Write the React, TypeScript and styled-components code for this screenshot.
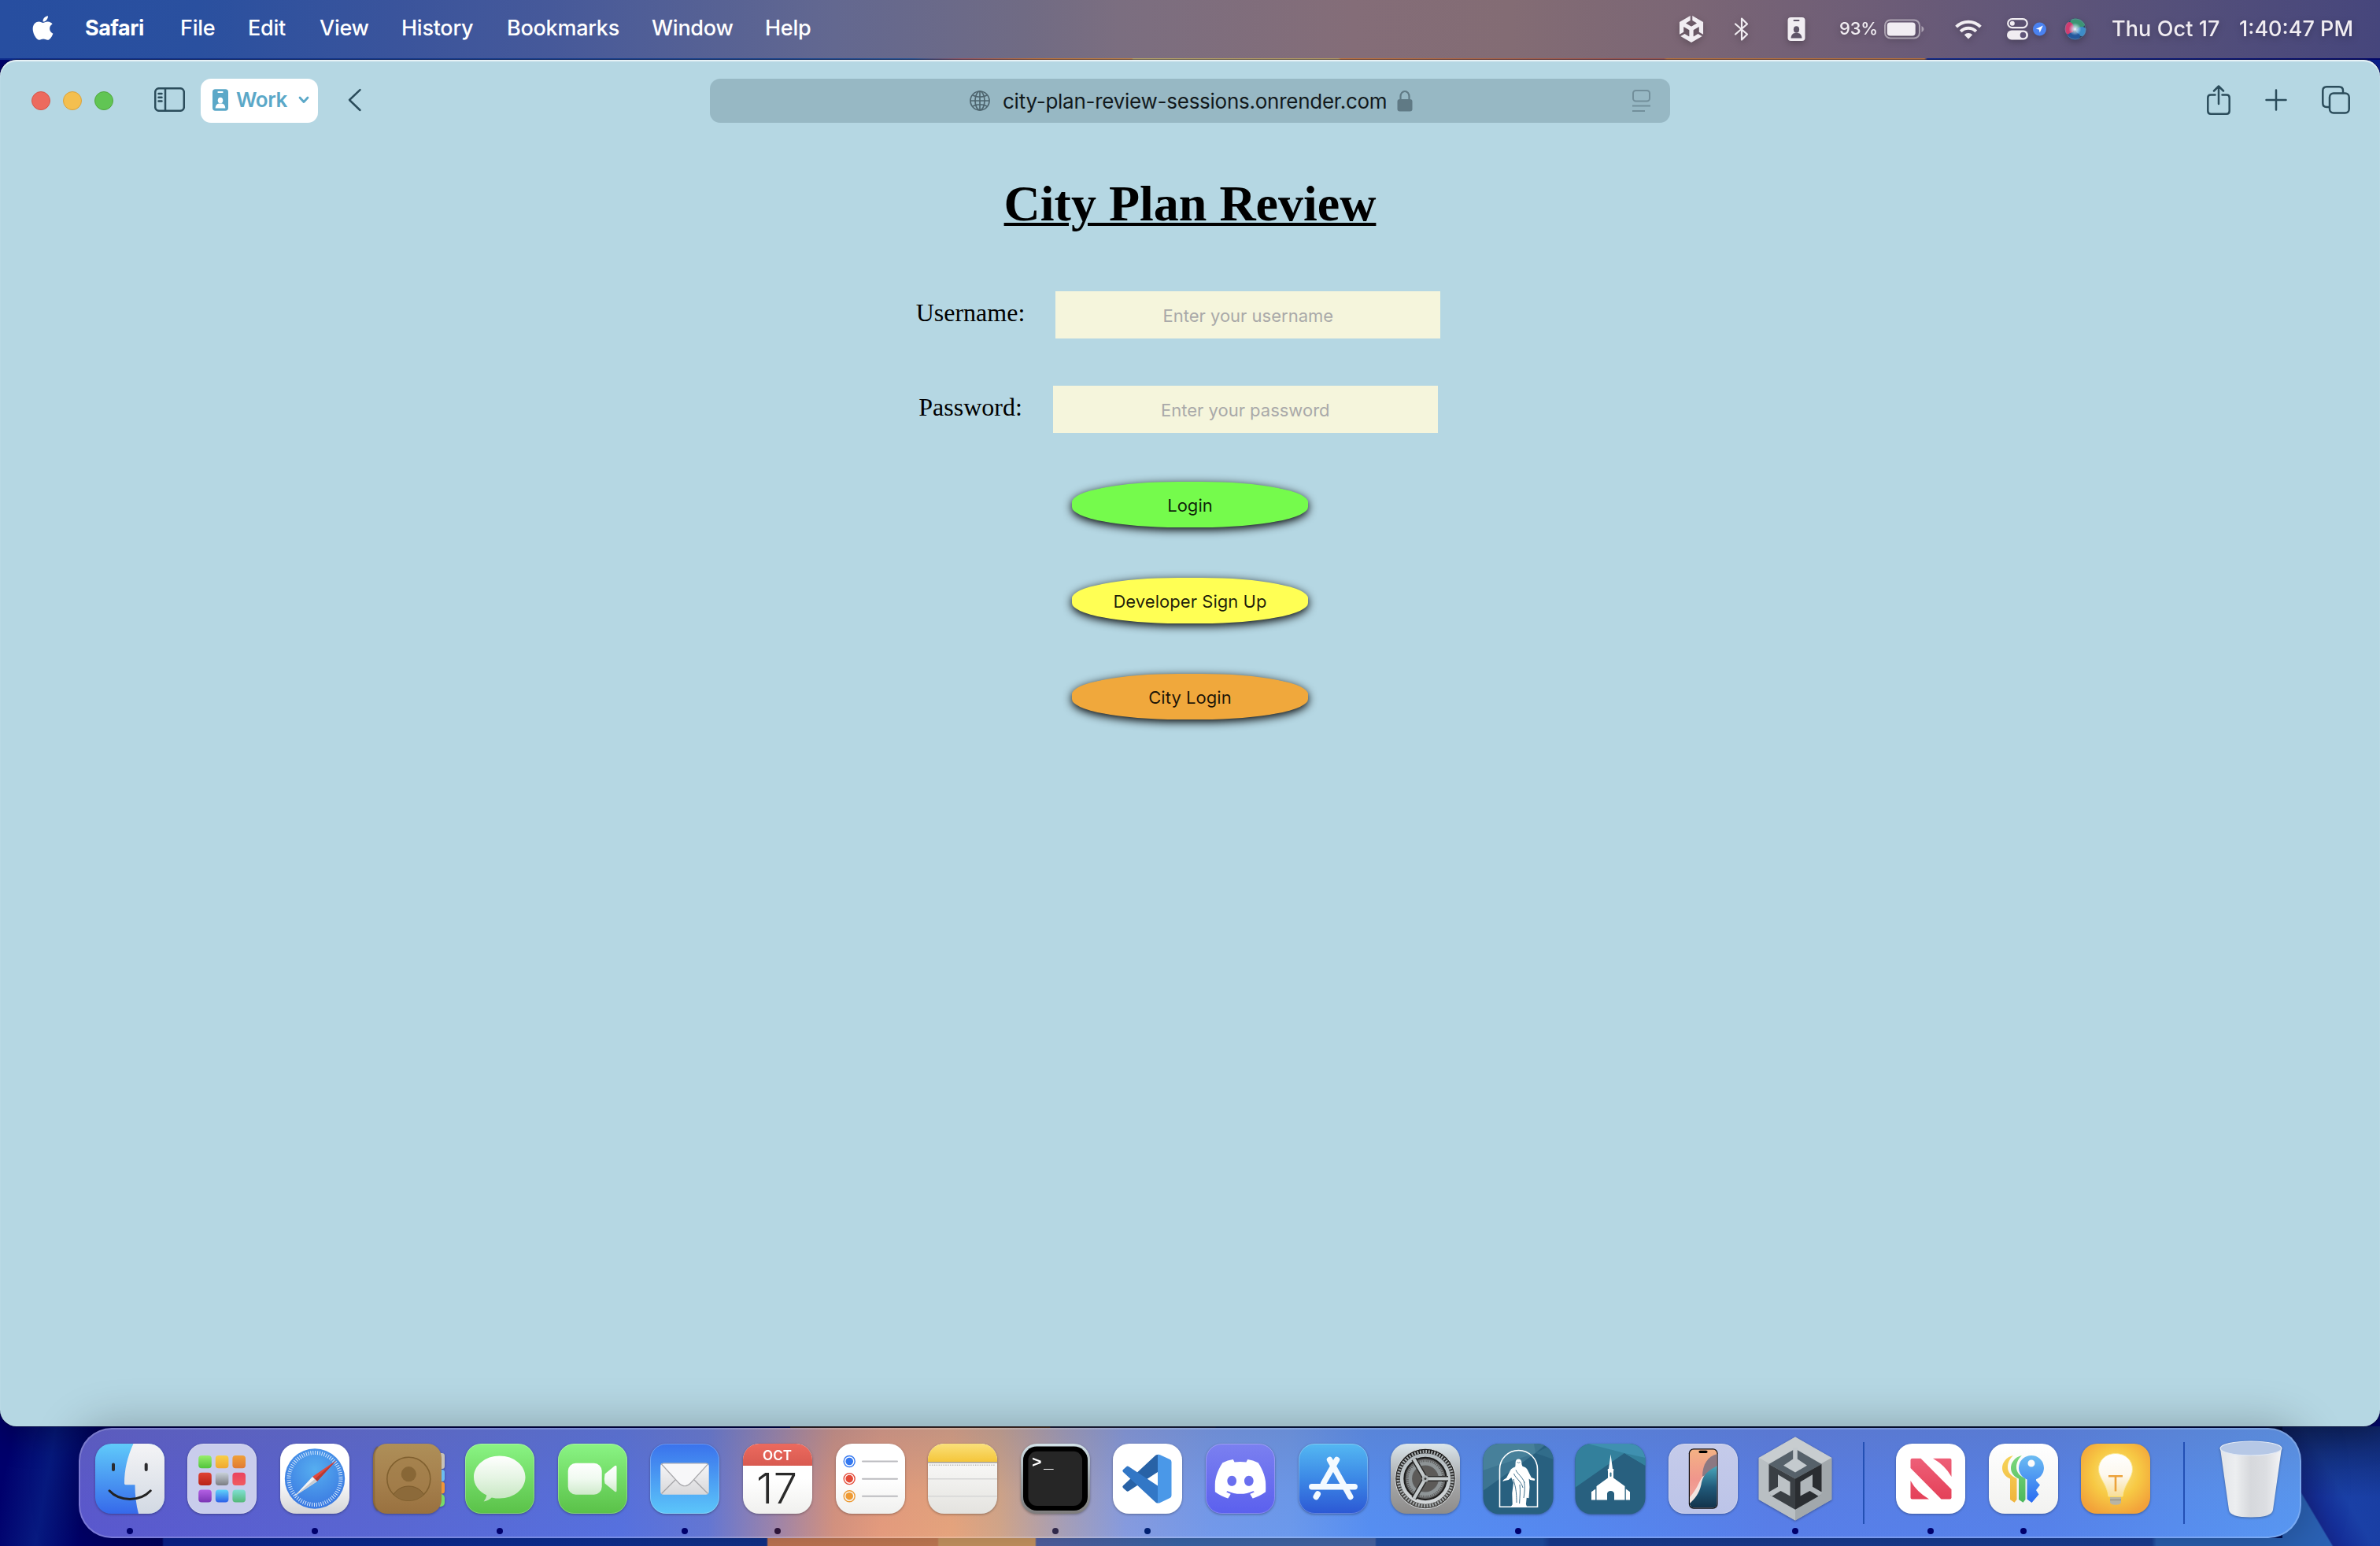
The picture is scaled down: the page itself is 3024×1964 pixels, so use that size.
import React from 'react';
import styled, { createGlobalStyle } from 'styled-components';
import { FaApple } from 'react-icons/fa';
import { SiDiscord, SiUnity } from 'react-icons/si';

const GlobalStyle = createGlobalStyle`
  * { box-sizing: border-box; }
  html, body { margin: 0; padding: 0; }
  body { font-family: Inter, "Liberation Sans", sans-serif; overflow: hidden; }
`;

const Desktop = styled.div`
  width: 3024px;
  height: 1964px;
  display: flex;
  flex-direction: column;
  overflow: hidden;
  background:
    linear-gradient(90deg, #0e2f92 0, #1c4a98 1000px, #2c5a9e 1160px, #a05c68 1222px, #cc7a3c 1320px, #cc8c4c 1438px, #c4b070 1440px, #c0a468 1700px, #cc7c40 1704px, #a45a54 2050px, #a45a54 2114px, #c4783f 2118px, #c4783f 2445px, #0d2a96 2449px, #04086c 100%) 0 0 / 100% 76px no-repeat,
    linear-gradient(90deg, transparent 206px, #0b2390 208px, #0d2f98 700px, #12338f 974px, #c97b58 976px, #cc8058 1191px, #d09c66 1193px, #d09c66 1315px, #5664a8 1317px, #3c6ab0 1500px, #4a6aac 1747px, #204fa5 1749px, #1f50a8 1960px, #183c94 1970px, #1a3f98 2734px, #2b62b5 2740px, #2b62b5 2910px) 0 1954px / 2910px 10px no-repeat,
    linear-gradient(90deg, #3c2a30 0, #5c3a2a 330px, #2a2a4a 331px, #1b2348 540px, #0a1e52 541px, #061440 100%) 1004px 1812px / 1700px 2px no-repeat,
    linear-gradient(180deg, rgba(8, 20, 60, 0.55), transparent 90px) 2880px 1812px / 144px 152px no-repeat,
    linear-gradient(59.3deg, #2b62b5 53px, #2b62b5 54px, #15288e 56px, #15309a 72px, #1a40a6 100px, #183ca0 100%) 2900px 1812px / 124px 152px no-repeat,
    linear-gradient(180deg, #0a2090, #04086c) 2900px 76px / 124px 1736px no-repeat,
    linear-gradient(100deg, #00006c 0, #00006c 330px, #071a80 385px, #00006a 440px, #02045c 600px, #000f50 100%);
`;

const MenuBar = styled.header`
  height: 74px;
  flex: none;
  display: flex;
  align-items: center;
  justify-content: space-between;
  padding: 0 32px 0 42px;
  color: #fff;
  background: linear-gradient(90deg, #274ea0 0, #2a509f 250px, #3a549c 500px, #46599a 700px, #636890 1060px, #706b84 1300px, #7b6e80 1420px, #846d78 1720px, #836c74 1920px, #7b6675 2140px, #6c5c77 2400px, #55507a 2750px, #46467c 100%);
`;

const MenuGroup = styled.nav`
  display: flex;
  align-items: center;
  height: 72px;
  margin-bottom: 2px;
`;

const AppleMenu = styled.span`
  display: flex;
  justify-content: center;
  width: 24px;
  svg { flex: none; display: block; margin-bottom: 2px; }
`;

const MenuEntry = styled.span<{ $w: number; $bold?: boolean; $ls?: number }>`
  width: ${p => p.$w}px;
  margin-left: 42px;
  font-size: 27px;
  line-height: 34px;
  font-weight: ${p => (p.$bold ? 700 : 500)};
  letter-spacing: ${p => p.$ls ?? -0.25}px;
  white-space: nowrap;
`;

const StatusGroup = styled.div`
  display: flex;
  align-items: center;
  height: 74px;
  color: #f1edf2;
  filter: drop-shadow(0 3px 4px rgba(0, 0, 0, 0.25));
`;

const StatusSlot = styled.span<{ $w: number; $gap?: number }>`
  width: ${p => p.$w}px;
  margin-left: ${p => p.$gap ?? 0}px;
  display: flex;
  align-items: center;
  svg { flex: none; display: block; }
`;

const StatusText = styled.span<{ $w: number; $gap: number; $size: number; $ls: number }>`
  width: ${p => p.$w}px;
  margin: 0 0 2px ${p => p.$gap}px;
  font-size: ${p => p.$size}px;
  letter-spacing: ${p => p.$ls}px;
  font-weight: 500;
  white-space: nowrap;
`;

const Window = styled.main`
  height: 1736px;
  margin-top: 2px;
  flex: none;
  border-radius: 21px;
  background: #b5d7e3;
  box-shadow: 0 0 0 1px rgba(0, 0, 30, 0.4), 0 12px 40px rgba(0, 0, 0, 0.3), inset 0 2px 1px rgba(255, 255, 255, 0.7);
  display: flex;
  flex-direction: column;
  clip-path: inset(-2px 0 -160px 0);
`;

const Toolbar = styled.div`
  display: grid;
  grid-template-columns: 902px 1220px 1fr;
  height: 104px;
  padding-top: 24px;
  color: #2b4c5b;
`;

const ToolGroup = styled.div<{ $end?: boolean }>`
  display: flex;
  align-items: center;
  height: 56px;
  justify-content: ${p => (p.$end ? 'flex-end' : 'flex-start')};
  padding: ${p => (p.$end ? '0 38px 0 0' : '0 0 0 40px')};
  gap: ${p => (p.$end ? '44px' : '0')};
`;

const ToolIcon = styled.svg`
  display: block;
  flex: none;
  margin-bottom: 3px;
  fill: none;
  stroke: currentColor;
  stroke-width: 2.5px;
  stroke-linecap: round;
  stroke-linejoin: round;
`;

const SidebarIcon = styled(ToolIcon)`
  margin-left: 36px;
`;

const Light = styled.span<{ $c: string; $b: string }>`
  width: 24px;
  height: 24px;
  margin-right: 16px;
  border-radius: 50%;
  background: ${p => p.$c};
  border: 1px solid ${p => p.$b};
`;

const ProfilePill = styled.button`
  display: flex;
  align-items: center;
  width: 149px;
  height: 56px;
  margin: 0 38px 0 20px;
  padding: 0 11px 2px 15px;
  border: 0;
  border-radius: 13px;
  background: #fff;
  color: #5ba8c8;
  font: 600 26px/32px Inter, sans-serif;
  letter-spacing: -0.4px;
`;

const ProfileName = styled.span`
  margin-left: 10px;
  width: 79px;
  text-align: left;
`;

const AddressField = styled.div`
  display: flex;
  align-items: center;
  height: 56px;
  padding: 0 25px 0 330px;
  border-radius: 13px;
  background: #97b8c4;
`;

const Address = styled.span`
  width: 488px;
  margin: 2px 13px 0 16px;
  font-size: 26px;
  line-height: 32px;
  letter-spacing: -0.26px;
  color: #12191c;
  white-space: nowrap;
`;

const ReaderSlot = styled.span`
  margin-left: auto;
  display: flex;
`;

const Page = styled.section`
  display: flex;
  flex-direction: column;
  align-items: center;
  padding-top: 42px;
`;

const Title = styled.h1`
  margin: 0 0 74px;
  font: bold 64px/74px "Liberation Serif", serif;
  color: #000;
  text-decoration: underline;
  text-decoration-thickness: 4px;
  text-underline-offset: 3px;
`;

const Field = styled.label`
  display: flex;
  align-items: center;
  height: 60px;
  margin-bottom: 60px;
  padding-right: 30px;
  gap: 39px;
  font: 32px/36px "Liberation Serif", serif;
  color: #000;
`;

const FieldName = styled.span`
  margin-top: -6px;
`;

const TextInput = styled.input`
  width: 489px;
  height: 60px;
  padding: 2px 0 0;
  border: 0;
  border-radius: 0;
  background: #f5f5dc;
  text-align: center;
  font: 22px Inter, sans-serif;
  &::placeholder { color: #a9a9a9; opacity: 1; }
`;

const PillButton = styled.button<{ $bg: string }>`
  width: 300px;
  height: 58px;
  margin: 2px 0 62px;
  padding: 2px 0 0;
  border: 0;
  border-radius: 45%;
  background: ${p => p.$bg};
  box-shadow: 0 3px 12px rgba(0, 0, 0, 1);
  color: rgba(0, 0, 0, 0.88);
  font: 22px Inter, sans-serif;
  letter-spacing: 0.05px;
`;

const DockArea = styled.footer`
  position: relative;
  flex: 1;
  display: flex;
  justify-content: center;
  padding-top: 2px;
`;

const Dock = styled.div`
  width: 2824px;
  height: 140px;
  display: flex;
  padding: 0 4px;
  border: 2px solid rgba(255, 255, 255, 0.2);
  border-radius: 42px;
  background:
    linear-gradient(180deg, rgba(95, 105, 150, 0.28), rgba(95, 110, 170, 0.08) 60%, rgba(80, 130, 255, 0.04)) border-box,
    linear-gradient(90deg, #5a56cc 0, #5966d2 400px, #5670de 690px, #6476d2 800px, #a485a4 890px, #d8927a 960px, #ea9c78 1020px, #eba578 1110px, #d6a684 1170px, #aaa0b4 1250px, #889cde 1330px, #749aea 1440px, #6c9aec 1540px, #568ff2 1640px, #5588f0 1900px, #587ee8 2150px, #5682ea 2500px, #5898f2 100%) border-box;
  box-shadow: 0 0 56px 4px rgba(0, 0, 0, 0.25);
`;

const DockItem = styled.div`
  width: 117.6px;
  flex: none;
  display: flex;
  flex-direction: column;
  align-items: center;
  padding-top: 18px;
`;

const RunningDot = styled.span<{ $c: string }>`
  width: 8px;
  height: 8px;
  margin-top: 18px;
  border-radius: 50%;
  background: ${p => p.$c};
`;

const DockDivider = styled.span`
  width: 2px;
  height: 104px;
  flex: none;
  margin: 16px 25px 0 27px;
  background: #2350b4;
`;

const IconSvg = styled.svg`
  display: block;
  width: 88px;
  height: 89px;
  flex: none;
  overflow: visible;
  filter: drop-shadow(0 1.5px 1.5px rgba(0, 0, 0, 0.32));
`;

function Grad({ id, stops, flat }: { id: string; stops: string[]; flat?: boolean }) {
  return (
    <linearGradient id={id} x1="0" y1="0" x2={flat ? '1' : '0'} y2={flat ? '0' : '1'}>
      {stops.map((c, i) => (
        <stop key={i} offset={i / (stops.length - 1)} stopColor={c} />
      ))}
    </linearGradient>
  );
}

const Tile = ({ fill }: { fill: string }) => <rect width="88" height="89" rx="20.5" fill={fill} />;

const TileEdge = () => (
  <rect x="0.5" y="0.5" width="87" height="88" rx="20" fill="none" stroke="#fff" strokeOpacity="0.25" />
);

const Finder = () => (
  <IconSvg viewBox="0 0 88 89">
    <defs>
      <Grad id="fi-b" stops={['#60cafa', '#3669ea']} />
      <Grad id="fi-w" stops={['#f4f4f6', '#d2d9e3']} />
      <clipPath id="fi-c"><rect width="88" height="89" rx="20.5" /></clipPath>
    </defs>
    <g clipPath="url(#fi-c)">
      <rect width="88" height="89" fill="url(#fi-b)" />
      <path d="M48.5 0C41 16 37 33 37 50.5q0 1.7 1.7 1.7H50.5Q50.5 72 55 89H88V0z" fill="url(#fi-w)" />
    </g>
    <path d="M23 26.5v6.5M64.7 26.5v6.5" stroke="#2b2b2e" strokeWidth="4" strokeLinecap="round" />
    <path d="M18 59.8C31 74 57 74 70.3 59.8" stroke="#222" strokeWidth="3" strokeLinecap="round" fill="none" />
  </IconSvg>
);

const launchColors = [
  ['#98ee6e', '#52c43c'], ['#f8cf48', '#f0a830'], ['#f0a038', '#e07a34'],
  ['#e04434', '#b82418'], ['#c8d0d8', '#7c7e84'], ['#ea4460', '#f05a60'],
  ['#b460e4', '#7a34b4'], ['#60d4fa', '#2c5ee8'], ['#80e0d4', '#54b878'],
];

const Launchpad = () => (
  <IconSvg viewBox="0 0 88 89">
    <Tile fill="#c9cdec" />
    <TileEdge />
    {launchColors.map((c, i) => (
      <g key={i}>
        <defs><Grad id={`lp-${i}`} stops={c} /></defs>
        <rect x={14.2 + (i % 3) * 21.6} y={15 + Math.floor(i / 3) * 21.7} width="16.6" height="16.2" rx="4" fill={`url(#lp-${i})`} />
      </g>
    ))}
  </IconSvg>
);

const Safari = () => (
  <IconSvg viewBox="0 0 88 89">
    <defs>
      <Grad id="sa-t" stops={['#ffffff', '#ffffff', '#d4d4d6']} />
      <radialGradient id="sa-r" cx=".5" cy=".35" r=".6"><stop offset="0" stopColor="#56aef0" /><stop offset="1" stopColor="#3c7ce2" /></radialGradient>
    </defs>
    <Tile fill="url(#sa-t)" />
    <circle cx="44" cy="44.5" r="38.2" fill="url(#sa-r)" />
    <circle cx="44" cy="44.5" r="33" fill="none" stroke="#e6f2ff" strokeWidth="5" strokeDasharray="0.9 1.98" />
    <path d="M71.3 21.3 41 42l5.8 6z" fill="#e2483c" />
    <path d="M71.3 21.3 43.9 45l2.9 3z" fill="#b63a34" />
    <path d="M17.8 67 41 42l5.8 6z" fill="#f5f5f5" />
    <path d="M17.8 67 43.9 45l2.9 3z" fill="#c8ccd2" />
  </IconSvg>
);

const Contacts = () => (
  <IconSvg viewBox="0 0 88 89">
    <defs>
      <Grad id="co-t" stops={['#ae8f58', '#a6814e', '#99713f']} />
      <clipPath id="co-c"><circle cx="45.3" cy="44.8" r="27.5" /></clipPath>
    </defs>
    <rect x="80" y="12" width="11" height="20" rx="3.5" fill="#c8c2b8" />
    <rect x="80" y="33" width="11" height="15" rx="3.5" fill="#6cbcf0" />
    <rect x="80" y="48.5" width="11" height="15" rx="3.5" fill="#f0963a" />
    <rect x="80" y="64" width="11" height="16" rx="5" fill="#78da68" />
    <rect width="87" height="89" rx="18" fill="url(#co-t)" />
    <path d="M6 4Q1 8 1 18V71Q1 81 6 85" fill="none" stroke="#7c5c2c" strokeOpacity=".5" strokeWidth="2.5" />
    <circle cx="45.3" cy="44.8" r="27.5" fill="#a07c48" fillOpacity=".5" stroke="#80602f" strokeWidth="1.6" />
    <circle cx="45.3" cy="38.7" r="9.6" fill="#886736" />
    <g clipPath="url(#co-c)"><ellipse cx="45.3" cy="72" rx="21" ry="18" fill="#8c6a3a" stroke="#7a5a2c" strokeWidth="1" /></g>
  </IconSvg>
);

const Messages = () => (
  <IconSvg viewBox="0 0 88 89">
    <defs><Grad id="me-t" stops={['#8af484', '#5ac148']} /><Grad id="me-b" stops={['#ffffff', '#e4f4e2', '#c4e6be']} /></defs>
    <Tile fill="url(#me-t)" />
    <TileEdge />
    <path d="M43.8 15.5C62 15.5 76.5 27.5 76.5 42.6S62 69.6 43.8 69.6c-3.4 0-6.8-.4-10-1.2-2.8 2.6-6.4 4.5-10.2 5 1.8-2.2 3.4-5 3.7-7.8C17.2 60.7 11 52.3 11 42.6 11 27.5 25.6 15.5 43.8 15.5z" fill="url(#me-b)" />
  </IconSvg>
);

const FaceTime = () => (
  <IconSvg viewBox="0 0 88 89">
    <defs><Grad id="ft-t" stops={['#8af484', '#5ac148']} /><Grad id="ft-b" stops={['#ffffff', '#f0faf0', '#cfeacb']} /></defs>
    <Tile fill="url(#ft-t)" />
    <TileEdge />
    <rect x="12.7" y="24.7" width="43" height="40" rx="10" fill="url(#ft-b)" />
    <path d="M59.5 38.5 72 28.2q2.5-1.6 2.5 1.3v30q0 2.9-2.5 1.3L59.5 50.5q-1.2-6 0-12z" fill="url(#ft-b)" />
  </IconSvg>
);

const Mail = () => (
  <IconSvg viewBox="0 0 88 89">
    <defs><Grad id="ma-t" stops={['#3a72ec', '#5cc6fa']} /><Grad id="ma-b" stops={['#f6f6f8', '#d8d8da']} /></defs>
    <Tile fill="url(#ma-t)" />
    <TileEdge />
    <rect x="13.2" y="24.7" width="61.5" height="40" rx="4" fill="url(#ma-b)" />
    <path d="M14.5 63.5 32 46M73.5 63.5 56 46" stroke="#a2a2a6" strokeWidth="1.2" />
    <path d="M14.5 26 36 49.5q8 8.5 16 0L73.5 26q-1-1-3-1h-53q-2 0-3 1z" fill="#f7f7f9" stroke="#a8a8ac" strokeWidth="1.2" />
  </IconSvg>
);

const Calendar = () => (
  <IconSvg viewBox="0 0 88 89">
    <defs><Grad id="ca-r" stops={['#ec6a5e', '#d85a50']} /><Grad id="ca-w" stops={['#ffffff', '#ffffff', '#f0f0ee']} /><clipPath id="ca-c"><rect width="88" height="89" rx="20.5" /></clipPath></defs>
    <g clipPath="url(#ca-c)">
      <rect width="88" height="89" fill="url(#ca-w)" />
      <rect width="88" height="28" fill="url(#ca-r)" />
    </g>
    <text x="43.5" y="21.3" textAnchor="middle" textLength="37" fontFamily="Inter" fontWeight="600" fontSize="17" fill="#fff">OCT</text>
    <text x="43" y="75.5" textAnchor="middle" textLength="52" fontFamily="Inter" fontWeight="300" fontSize="54" fill="#2a2a2a">17</text>
  </IconSvg>
);

const Reminders = () => (
  <IconSvg viewBox="0 0 88 89">
    <defs><Grad id="re-t" stops={['#ffffff', '#ffffff', '#f0f0ee']} /></defs>
    <Tile fill="url(#re-t)" />
    {['#3478f0', '#e44a38', '#ee9a34'].map((c, i) => (
      <g key={c}>
        <circle cx="17.2" cy={22.5 + i * 22.1} r="4.8" fill={c} />
        <circle cx="17.2" cy={22.5 + i * 22.1} r="7" fill="none" stroke={c} strokeWidth="1.4" />
        <rect x="33" y={21.6 + i * 22.1} width="46" height="2" rx="1" fill="#bcbcc0" />
      </g>
    ))}
  </IconSvg>
);

const Notes = () => (
  <IconSvg viewBox="0 0 88 89">
    <defs><Grad id="no-y" stops={['#fae07a', '#f5c63a']} /><Grad id="no-w" stops={['#ffffff', '#e4e3df']} /><clipPath id="no-c"><rect width="88" height="89" rx="20.5" /></clipPath></defs>
    <g clipPath="url(#no-c)">
      <rect width="88" height="89" fill="url(#no-w)" />
      <rect width="88" height="23" fill="url(#no-y)" />
      <rect y="23" width="88" height="1.6" fill="#a8a294" />
      <path d="M2 27.3H86" stroke="#bcbab4" strokeWidth="1.6" strokeDasharray="1.4 1.5" />
      <path d="M0 44.7H88M0 66.8H88" stroke="#d6d6d6" strokeWidth="1.6" />
    </g>
  </IconSvg>
);

const Terminal = () => (
  <IconSvg viewBox="0 0 88 89">
    <defs><Grad id="te-t" stops={['#d4e4ea', '#9aa2a6', '#7e7c7c']} /></defs>
    <Tile fill="url(#te-t)" />
    <rect x="3" y="3.5" width="82" height="81.5" rx="17.5" fill="#000" />
    <rect x="9.5" y="9.7" width="68.5" height="69.3" rx="11" fill="#262626" />
    <text x="14" y="30" fontFamily="Liberation Mono, monospace" fontWeight="700" fontSize="21" fill="#fff">&gt;</text>
    <text x="29" y="30.5" fontFamily="Liberation Mono, monospace" fontWeight="700" fontSize="21" fill="#fff">_</text>
  </IconSvg>
);

const Code = () => (
  <IconSvg viewBox="0 0 88 89">
    <Tile fill="#fff" />
    <path d="M57 14v22L20 60.3q-1.5 1-2.8-.2L13 56.3q-1.5-1.5 0-3L54 15q1.5-1.2 3-1z" fill="#2862a6" />
    <path d="M57 75.500v-22L20 29q-1.5-1-2.8.2L13 33q-1.5 1.5 0 3l41 38.3q1.5 1.4 3 1.2z" fill="#3277c6" />
    <path d="M57 13.8q1.5-.3 3 .4l12.5 5.9q2 1 2 3.2v42.4q0 2.200-2 3.200L60 75q-1.500.8-3 .5z" fill="#4a98e8" />
  </IconSvg>
);

const Discord = () => (
  <IconSvg viewBox="0 0 88 89">
    <defs><Grad id="di-t" stops={['#7b80f0', '#5b60ee']} /></defs>
    <Tile fill="url(#di-t)" />
    <TileEdge />
    <SiDiscord size={65} x={11.5} y={12.3} color="#fff" />
  </IconSvg>
);

const AppStore = () => (
  <IconSvg viewBox="0 0 88 89">
    <defs><Grad id="as-t" stops={['#54b8f2', '#3c88e6', '#2c58d4']} /></defs>
    <Tile fill="url(#as-t)" />
    <TileEdge />
    <g stroke="#f4faff" strokeWidth="7.4" strokeLinecap="round">
      <path d="M16.800 54.700H71.200" />
      <path d="M48.500 20.500 31.500 50.500M24.300 64 22.200 67.500" />
      <path d="M39.500 20.500 65.800 67.500" />
    </g>
  </IconSvg>
);

const Settings = () => (
  <IconSvg viewBox="0 0 88 89">
    <defs><Grad id="se-t" stops={['#dbe6ec', '#a8aaac', '#8e8c8a']} /><Grad id="se-d" stops={['#161616', '#4c4a48']} /><Grad id="se-l" stops={['#b4bcc0', '#d2d6d8']} /></defs>
    <Tile fill="url(#se-t)" />
    <circle cx="44" cy="44.5" r="38.3" fill="url(#se-d)" stroke="#d8dcde" strokeWidth="1" />
    <circle cx="44" cy="44.5" r="34.5" fill="none" stroke="#a8aeb0" strokeWidth="4" strokeDasharray="1.9 1.712" />
    <circle cx="44" cy="44.5" r="26" fill="#5e5e5e" />
    <circle cx="44" cy="44.5" r="22.5" fill="none" stroke="#8e9496" strokeWidth="3" strokeDasharray="1.2 1.2" />
    <circle cx="44" cy="44.5" r="19.2" fill="none" stroke="#8e9496" strokeWidth="4.5" />
    <circle cx="44" cy="44.5" r="16" fill="#5c5a58" />
    <circle cx="44" cy="44.5" r="26.500" fill="none" stroke="#1e1e1e" strokeWidth="2" />
    <circle cx="44" cy="44.5" r="30" fill="none" stroke="url(#se-l)" strokeWidth="4.500" />
    <path d="M44 44.5H73M44 44.5 29.5 19.500M44 44.5 29.5 69.500" stroke="#2a2a2a" strokeWidth="7" />
    <path d="M44 44.5H73M44 44.5 29.5 19.500M44 44.5 29.5 69.500" stroke="#c4cacc" strokeWidth="4.200" />
    <circle cx="44" cy="44.5" r="4.200" fill="#aeb4b6" />
    <circle cx="44" cy="44.5" r="1.500" fill="#3a3a3a" />
  </IconSvg>
);

const TealTile = ({ id, church }: { id: string; church?: boolean }) => (
  <>
    <defs><clipPath id={id}><rect x="-.5" width="89" height="89.500" rx="20.500" /></clipPath></defs>
    <g clipPath={`url(#${id})`}>
      <rect x="-1" width="90" height="90" fill="#28607f" />
      {church ? (
        <>
          <path d="M-1 0H88V10L62 12-1 56z" fill="#33809c" />
          <path d="M15 0H89V28L62 12z" fill="#3f90b0" />
          <path d="M62 12 89 18V28z" fill="#33809c" />
        </>
      ) : (
        <>
          <path d="M-1 0H80L66 12-1 60z" fill="#3c7490" />
          <path d="M-1 0H64L66 12-1 34z" fill="#47809a" />
          <path d="M66 12 89 0V20z" fill="#316c8a" />
        </>
      )}
    </g>
  </>
);

const Library = () => (
  <IconSvg viewBox="0 0 88 89">
    <TealTile id="gl-c" />
    <path d="M20.500 80.300V32.500a24 24 0 0 1 48 0V80.300z" fill="none" stroke="#fff" strokeWidth="1.600" />
    <path d="M44.300 19.500c2.700 0 4 2 4 4.600 0 1.600.4 3.400 1.200 4.600 2.800.8 5 2 6.200 4.200l5 10 4.600 1.800-.6 2.400-5.400-1-1.700-1.600.9 10.600-1 14.200-2.800-.6-.8 8.400 1.200 2.900H34.800l1.900-2.700-.4-14.600 1.700-13-2.700-6.700-3.500 3-4.900.9-2.800 1.100 1.200-2 3.800-2.500 5-9.800c1.200-2 3.200-3.300 6-4.200.6-1.800.4-3.200.5-5.200.1-2.800 1.300-4.800 3.700-4.800z" fill="#fff" />
    <path d="M41 33.500c2 5 8 8 11 16M38.500 38c2 6 9 9 11.500 18M38 45c1 7 4 10 4 30M46 52c1 9 0 15-.4 24M51.500 48c1.500 8 .5 14-.5 21" stroke="#28607f" strokeWidth=".9" fill="none" />
    <path d="M42.500 23.500q2 1.800 4 0" stroke="#28607f" strokeWidth=".7" fill="none" />
  </IconSvg>
);

const Church = () => (
  <IconSvg viewBox="0 0 88 89">
    <TealTile id="ch-c" church />
    <path d="M44.500 13.500 47 32h1.200v3H48v8.500l14.500 10.400V71.500H49V63.500q-.5-3.600-4.500-3.600T40 63.500v8H26.500V53.900L41 43.500V35h-.2v-3H42z" fill="#fff" />
    <path d="M25.200 57.500v14H20V61.200zM63.800 57.500v14H69V61.200z" fill="#fff" />
    <rect x="43.500" y="36.500" width="2" height="5.500" rx="1" fill="#33738f" />
  </IconSvg>
);

const Phone = () => (
  <IconSvg viewBox="0 0 88 89">
    <defs>
      <Grad id="ph-t" stops={['#c5cbea', '#bcc4e8']} />
      <Grad id="ph-p" stops={['#f4b284', '#f0968c', '#f3b0a6']} />
      <Grad id="ph-b" stops={['#4aa8bc', '#215a7a', '#123048']} />
      <clipPath id="ph-c"><rect x="27" y="7.500" width="34.500" height="74" rx="5" /></clipPath>
    </defs>
    <Tile fill="url(#ph-t)" />
    <TileEdge />
    <rect x="25.800" y="6.300" width="36.800" height="76.400" rx="6" fill="#0d0d0f" />
    <g clipPath="url(#ph-c)">
      <rect x="27" y="7" width="35" height="76" fill="url(#ph-p)" />
      <path d="M62 13C50 16 43 26 43 42L62 30z" fill="#8c7882" />
      <path d="M27 68C36 58 38 50 43 42L48 40 40 66 27 82z" fill="#f4e4e0" />
      <path d="M62 28C50 35 44 38 41.500 52 39 64 33 70 27 76V83H62z" fill="url(#ph-b)" />
    </g>
    <rect x="38.500" y="8.700" width="11" height="3.200" rx="1.600" fill="#000" />
  </IconSvg>
);

const UnityHub = () => (
  <IconSvg viewBox="0 0 88 89">
    <path d="M44-8.500 90.300 18V71L44 97.500-2.300 71V18z" fill="#b2b8bc" />
    <path d="M44-8.500 90.300 18 44 44-2.300 18z" fill="#c8cdd0" />
    <path d="M90.300 18V71L44 97.500V44z" fill="#a2a8ac" />
    <path d="M-2.300 18V71L44 97.500V44z" fill="#b9bfc3" />
    <path d="M10.500 26 44 6.500 77.500 26 44 44.500z" fill="#56616a" />
    <path d="M10.500 26 44 44.500V83.700L13 66 10.500 61z" fill="#3a3f44" />
    <path d="M77.500 26 44 44.500V83.700L75 66 77.500 61z" fill="#2a2d31" />
    <path d="M41.200 5V19.500L29 27.700 44 36.500 59 27.700 46.800 19.500V5z" fill="#c4cace" />
    <path d="M22 39.300 37.500 48.500V66.500L25.500 60 14 67 9.500 62 22 54.700z" fill="#bcc2c6" />
    <path d="M66 39.300 50.500 48.500V66.500L62.500 60 74 67 78.500 62 66 54.700z" fill="#b0b6ba" />
  </IconSvg>
);

const News = () => (
  <IconSvg viewBox="0 0 88 89">
    <defs><linearGradient id="ne-r" gradientUnits="userSpaceOnUse" x1="0" y1="18" x2="0" y2="71"><stop offset="0" stopColor="#ee6078" /><stop offset="1" stopColor="#e44058" /></linearGradient></defs>
    <Tile fill="#fff" />
    <path d="M20.500 18.700H31.500L70.500 58V68.500q0 2-2 2H57.500L18.500 31V20.700q0-2 2-2z" fill="url(#ne-r)" />
    <path d="M47 18.700H68.500q2 0 2 2V42Q63 28 47 18.700z" fill="url(#ne-r)" />
    <path d="M18.500 47V68.500q0 2 2 2H42Q26 61 18.500 47z" fill="url(#ne-r)" />
  </IconSvg>
);

const Passwords = () => (
  <IconSvg viewBox="0 0 88 89">
    <defs><Grad id="pa-t" stops={['#ffffff', '#f2f2f0']} /><Grad id="pa-b" stops={['#6cbcf2', '#2a6cf2']} /><Grad id="pa-g" stops={['#7cd87c', '#4cb85c']} /><Grad id="pa-y" stops={['#f6d45a', '#f0b43c']} /></defs>
    <Tile fill="url(#pa-t)" />
    <path d="M31 15C22 17 17 24 17 31c0 6 4 11 10 13.500V71l5.500 3.700 3-3.700V44.500C28 41 24 36 24 30c0-6 2.500-11 7-15z" fill="url(#pa-y)" />
    <path d="M42 15C33 17 28 24 28 31c0 6 4 11 10 13.500V71l5.500 3.700 3-3.700V44.500C39 41 35 36 35 30c0-6 2.500-11 7-15z" fill="url(#pa-g)" />
    <path fillRule="evenodd" d="M54 15a15.700 15.700 0 0 1 6 30.300V47l5 5.500-5 6.500 3.500 5.500L54.500 75 48.500 70.500V45.500A15.700 15.700 0 0 1 54 15zm0 5.500a4.500 4.500 0 1 0 0 9 4.500 4.500 0 0 0 0-9z" fill="url(#pa-b)" />
  </IconSvg>
);

const Tips = () => (
  <IconSvg viewBox="0 0 88 89">
    <defs>
      <radialGradient id="ti-g" cx=".5" cy=".42" r=".62"><stop offset="0" stopColor="#fae68a" /><stop offset=".55" stopColor="#f7c944" /><stop offset="1" stopColor="#f2a23a" /></radialGradient>
      <Grad id="ti-b" stops={['#ffffff', '#fdf8ee', '#f8de98']} />
    </defs>
    <Tile fill="url(#ti-g)" />
    <path d="M44 12.500C56.500 12.500 65.500 21 65.500 32.500 65.500 44 54.500 52 53 67H35C33.500 52 22.500 44 22.500 32.500 22.500 21 31.500 12.500 44 12.500z" fill="url(#ti-b)" stroke="#fbe78a" strokeWidth="1" />
    <path d="M35 41.200H53M44 41.200V60.500" stroke="#eca23a" strokeWidth="2.600" />
    <path d="M37 68H51V74q0 3.800-7 3.800T37 74z" fill="#b8b4a4" />
    <path d="M37 71.500H51" stroke="#8e8a7c" strokeWidth="1" />
  </IconSvg>
);

const Trash = () => (
  <IconSvg viewBox="0 0 88 89">
    <defs><Grad id="tr-b" flat stops={['#e2e4e8', '#eceef0', '#d6d8dc', '#dcdee2', '#f4f4f6']} /></defs>
    <path d="M5 6 16 84q1 9.500 28 9.500T72 84L83 6z" fill="url(#tr-b)" />
    <ellipse cx="44" cy="6" rx="39" ry="9" fill="#b6c8e6" stroke="#e2e9f4" strokeWidth="1.200" />
  </IconSvg>
);

const NAVY = '#00006c';

type DockApp = { name: string; Icon: () => React.ReactElement; dot?: string };

const mainApps: DockApp[] = [
  { name: 'finder', Icon: Finder, dot: NAVY },
  { name: 'launchpad', Icon: Launchpad },
  { name: 'safari', Icon: Safari, dot: NAVY },
  { name: 'contacts', Icon: Contacts },
  { name: 'messages', Icon: Messages, dot: NAVY },
  { name: 'facetime', Icon: FaceTime },
  { name: 'mail', Icon: Mail, dot: NAVY },
  { name: 'calendar', Icon: Calendar, dot: '#2c1438' },
  { name: 'reminders', Icon: Reminders },
  { name: 'notes', Icon: Notes },
  { name: 'terminal', Icon: Terminal, dot: '#30284a' },
  { name: 'code', Icon: Code, dot: '#002070' },
  { name: 'discord', Icon: Discord },
  { name: 'appstore', Icon: AppStore },
  { name: 'settings', Icon: Settings },
  { name: 'library', Icon: Library, dot: NAVY },
  { name: 'church', Icon: Church },
  { name: 'phone', Icon: Phone },
  { name: 'unity', Icon: UnityHub, dot: NAVY },
];

const recentApps: DockApp[] = [
  { name: 'news', Icon: News, dot: NAVY },
  { name: 'passwords', Icon: Passwords, dot: NAVY },
  { name: 'tips', Icon: Tips },
];

const renderApp = ({ name, Icon, dot }: DockApp) => (
  <DockItem key={name}>
    <Icon />
    {dot && <RunningDot $c={dot} />}
  </DockItem>
);

const BadgeGlyph = ({ w, h, cut }: { w: number; h: number; cut: string }) => (
  <svg width={w} height={h} viewBox="0 0 22 30">
    <rect width="22" height="30" rx="4" fill="currentColor" />
    <rect x="7" y="3" width="8" height="2" rx="1" fill={cut} />
    <ellipse cx="11" cy="15.500" rx="3.600" ry="4.200" fill={cut} />
    <path d="M4 26.500q.5-6 5-6.500h4q4.500.5 5 6.500z" fill={cut} />
  </svg>
);

export default function App() {
  return (
    <Desktop>
      <GlobalStyle />
      <MenuBar>
        <MenuGroup>
          <AppleMenu><FaApple size={35} /></AppleMenu>
          <MenuEntry $w={79} $bold $ls={-0.5}>Safari</MenuEntry>
          <MenuEntry $w={44}>File</MenuEntry>
          <MenuEntry $w={49}>Edit</MenuEntry>
          <MenuEntry $w={62}>View</MenuEntry>
          <MenuEntry $w={92}>History</MenuEntry>
          <MenuEntry $w={142}>Bookmarks</MenuEntry>
          <MenuEntry $w={102}>Window</MenuEntry>
          <MenuEntry $w={60}>Help</MenuEntry>
        </MenuGroup>
        <StatusGroup>
          <StatusSlot $w={32}><SiUnity size={34} /></StatusSlot>
          <StatusSlot $w={20} $gap={39}>
            <svg width="20" height="32" viewBox="0 0 20 32" fill="none" stroke="currentColor" strokeWidth="2.200" strokeLinejoin="round" strokeLinecap="round">
              <path d="M2 9.500 17 22.500 10 29.500V2.500L17 9.500 2 22.500" />
            </svg>
          </StatusSlot>
          <StatusSlot $w={23} $gap={48}><BadgeGlyph w={23} h={30} cut="#5f5568" /></StatusSlot>
          <StatusText $w={48} $gap={43} $size={22} $ls={-0.2}>93%</StatusText>
          <StatusSlot $w={51} $gap={9}>
            <svg width="51" height="26" viewBox="0 0 51 26">
              <rect x="1" y="1.500" width="44" height="23" rx="7" fill="none" stroke="currentColor" strokeOpacity=".5" strokeWidth="2" />
              <rect x="3.700" y="4.500" width="36" height="17" rx="4" fill="currentColor" />
              <path d="M47.500 9q3 1.500 3 4t-3 4z" fill="currentColor" fillOpacity=".5" />
            </svg>
          </StatusSlot>
          <StatusSlot $w={34} $gap={39}>
            <svg width="34" height="26" viewBox="0 0 34 26" fill="none" stroke="currentColor" strokeWidth="4">
              <path d="M1.600 10.200a21.800 21.800 0 0 1 30.800 0" />
              <path d="M7.200 15.800a13.800 13.800 0 0 1 19.600 0" />
              <path d="M17 25.500 11.800 20.300a7.300 7.300 0 0 1 10.400 0z" fill="currentColor" stroke="none" />
            </svg>
          </StatusSlot>
          <StatusSlot $w={50} $gap={32}>
            <svg width="50" height="28" viewBox="0 0 50 28">
              <rect x="1.200" y="1.200" width="24.500" height="11" rx="5.500" fill="none" stroke="currentColor" strokeWidth="2.200" />
              <circle cx="6.800" cy="6.700" r="3" fill="currentColor" />
              <rect y="15.500" width="27" height="12" rx="6" fill="currentColor" />
              <circle cx="20.500" cy="21.500" r="3.800" fill="#5f5478" />
              <circle cx="41.500" cy="14" r="8.500" fill="#4a82f0" />
              <path d="M45.800 9.600 36.800 13.700l4 .9.900 4z" fill="#fff" />
            </svg>
          </StatusSlot>
          <StatusSlot $w={28} $gap={23}>
            <svg width="28" height="28" viewBox="0 0 28 28">
              <defs>
                <radialGradient id="siri"><stop offset="0" stopColor="#fff" /><stop offset=".3" stopColor="#cfe4f4" stopOpacity=".8" /><stop offset="1" stopColor="#cfe4f4" stopOpacity="0" /></radialGradient>
                <clipPath id="siri-c"><circle cx="14" cy="14" r="13.500" /></clipPath>
              </defs>
              <g clipPath="url(#siri-c)">
                <rect width="28" height="28" fill="#2c3c58" />
                <ellipse cx="17" cy="6" rx="10" ry="7" fill="#3c9474" />
                <ellipse cx="6" cy="13" rx="6" ry="8" fill="#d03c70" />
                <ellipse cx="22" cy="17" rx="7" ry="6" fill="#3c8cc8" />
                <ellipse cx="12" cy="23" rx="8" ry="5" fill="#24589c" />
              </g>
              <circle cx="13.500" cy="14" r="8" fill="url(#siri)" />
              <circle cx="14" cy="14" r="13" fill="none" stroke="#6c8aa8" strokeOpacity=".6" />
            </svg>
          </StatusSlot>
          <StatusText $w={144} $gap={32} $size={27} $ls={0.1}>Thu Oct 17</StatusText>
          <StatusText $w={147} $gap={18} $size={27} $ls={0}>1:40:47 PM</StatusText>
        </StatusGroup>
      </MenuBar>

      <Window>
        <Toolbar>
          <ToolGroup>
            <Light $c="#ec6a5e" $b="#d65549" />
            <Light $c="#f4bf4f" $b="#d9a23e" />
            <Light $c="#61c554" $b="#51a73e" />
            <SidebarIcon width="39" height="31" viewBox="0 0 39 31">
              <rect x="1.200" y="1.200" width="36.600" height="28.600" rx="5" />
              <path d="M14 1.500V29.500" />
              <path d="M5.500 8H9.500M5.500 12.700H9.500M5.500 17.400H9.500" />
            </SidebarIcon>
            <ProfilePill>
              <BadgeGlyph w={20} h={28} cut="#fff" />
              <ProfileName>Work</ProfileName>
              <svg width="14" height="10" viewBox="0 0 14 10" fill="none" stroke="currentColor" strokeWidth="2.800" strokeLinecap="round" strokeLinejoin="round"><path d="M2 2 7 7.500 12 2" /></svg>
            </ProfilePill>
            <ToolIcon width="18" height="30" viewBox="0 0 18 30"><path d="M15.500 2.200 2 15 15.500 28" /></ToolIcon>
          </ToolGroup>
          <AddressField>
            <svg width="26" height="27" viewBox="0 0 26 27" fill="none" stroke="#4e656f" strokeWidth="1.700">
              <circle cx="13" cy="13" r="12" />
              <ellipse cx="13" cy="13" rx="6" ry="12" />
              <path d="M13 1V25M1 13H25M3.800 6Q13 10.500 22.200 6M3.800 20Q13 15.500 22.200 20" />
            </svg>
            <Address>city-plan-review-sessions.onrender.com</Address>
            <svg width="20" height="28" viewBox="0 0 20 28">
              <path d="M4.500 13V8.500a5.500 6.500 0 0 1 11 0V13" fill="none" stroke="#607a85" strokeWidth="2.200" />
              <rect x=".5" y="12" width="19" height="15.500" rx="3" fill="#607a85" />
            </svg>
            <ReaderSlot>
              <svg width="23" height="28" viewBox="0 0 23 28" fill="none" stroke="#728f9b" strokeWidth="2">
                <rect x="1" y="1" width="21" height="13.500" rx="3.500" />
                <path d="M0 20.500H23M0 27H16" />
              </svg>
            </ReaderSlot>
          </AddressField>
          <ToolGroup $end>
            <ToolIcon width="30" height="38" viewBox="0 0 30 38">
              <path d="M10.500 12.500H5q-3.700 0-3.700 3.700V33q0 3.700 3.700 3.700H25q3.700 0 3.700-3.700V16.200q0-3.700-3.700-3.700H19.500" />
              <path d="M15 24V2M9 7.500 15 1.500 21 7.500" />
            </ToolIcon>
            <ToolIcon width="28" height="28" viewBox="0 0 28 28"><path d="M14 1.500V26.500M1.500 14H26.500" /></ToolIcon>
            <ToolIcon width="36" height="36" viewBox="0 0 36 36">
              <rect x="10" y="9.500" width="24.700" height="25" rx="5" />
              <path d="M9.500 27H6.300q-5 0-5-5V6.300q0-5 5-5H22q5 0 5 5V9" />
            </ToolIcon>
          </ToolGroup>
        </Toolbar>
        <Page>
          <Title>City Plan Review</Title>
          <Field>
            <FieldName>Username:</FieldName>
            <TextInput placeholder="Enter your username" />
          </Field>
          <Field>
            <FieldName>Password:</FieldName>
            <TextInput type="password" placeholder="Enter your password" />
          </Field>
          <PillButton $bg="#75fb4c">Login</PillButton>
          <PillButton $bg="#ffff54">Developer Sign Up</PillButton>
          <PillButton $bg="#f0a83c">City Login</PillButton>
        </Page>
      </Window>

      <DockArea>
        <Dock>
          {mainApps.map(renderApp)}
          <DockDivider />
          {recentApps.map(renderApp)}
          <DockDivider />
          <DockItem><Trash /></DockItem>
        </Dock>
      </DockArea>
    </Desktop>
  );
}
